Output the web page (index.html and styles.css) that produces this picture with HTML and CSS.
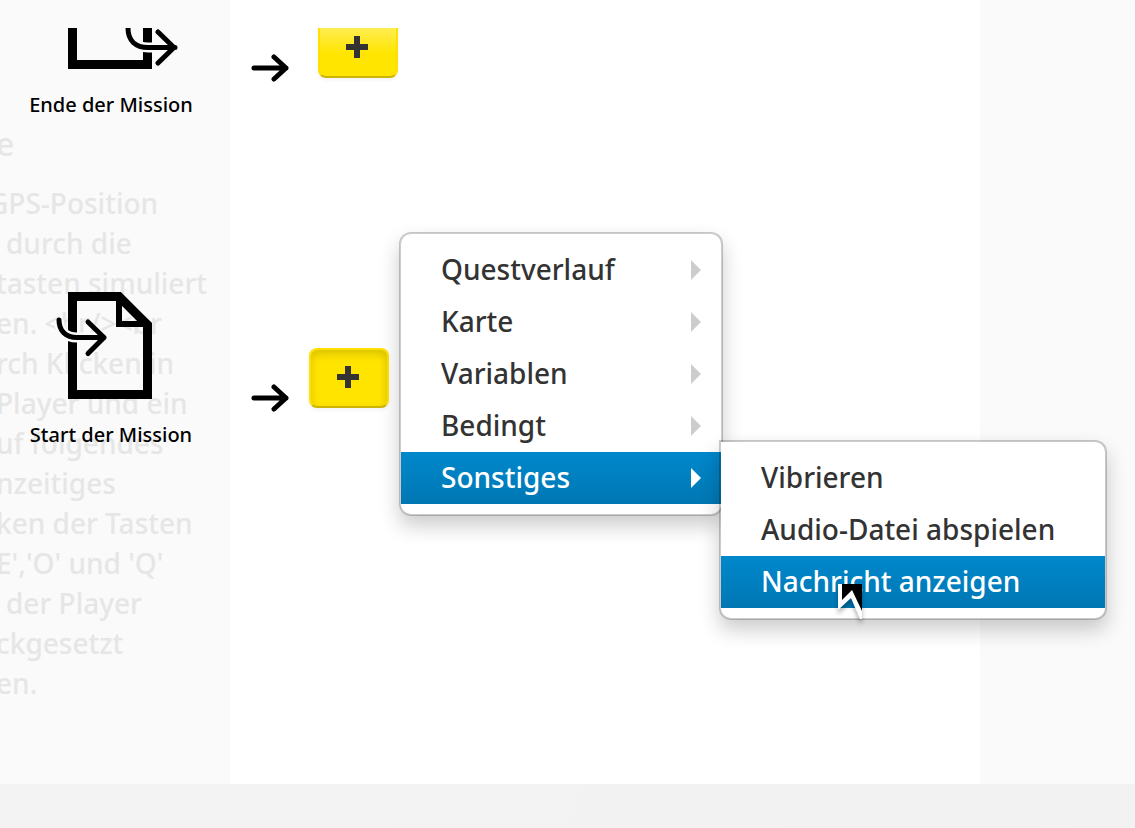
FILE: index.html
```html
<!DOCTYPE html>
<html lang="de">
<head>
<meta charset="utf-8">
<title>Mission</title>
<link rel="stylesheet" href="styles.css">
</head>
<body>
<main class="editor">
  <aside class="help">
    <h2 class="help-title">e</h2>
    <p class="help-text">
      <span class="line line-cut">GPS-Position</span>
      <span class="line line-in">durch die</span>
      <span class="line">tasten simuliert</span>
      <span class="line">en. &lt;br/&gt;&lt;br</span>
      <span class="line">rch Klicken in</span>
      <span class="line">Player und ein</span>
      <span class="line">uf folgendes</span>
      <span class="line">nzeitiges</span>
      <span class="line">ken der Tasten</span>
      <span class="line">E','O' und 'Q'</span>
      <span class="line line-in">der Player</span>
      <span class="line">ckgesetzt</span>
      <span class="line">en.</span>
    </p>
  </aside>
  <div class="canvas"></div>
  <div class="side"></div>

  <div class="rules">
    <section class="rule">
      <div class="trigger">
        <svg class="trigger-icon" width="124" height="107" viewBox="0 0 124 107">
          <path fill="none" stroke="#000" stroke-width="9" d="M17.500 4.500H64L92.500 33.500V102.500H17.500Z"/>
          <path fill="none" stroke="#fafafa" stroke-width="10" d="M73 66C73 79 81 85.500 93 85.500H112"/>
          <path fill="none" stroke="#000" stroke-width="5" stroke-linecap="round" stroke-linejoin="round" d="M73 66C73 79 81 85.500 93 85.500H120M103 70L119 85.500L103 101"/>
        </svg>
        <span class="trigger-label">Ende der Mission</span>
      </div>
      <svg class="arrow" width="40" height="30" viewBox="0 0 40 30"><path d="M4 15H36M24 4L36 15L24 26"/></svg>
      <div class="action action-wide">
        <button class="add" type="button" aria-label="Aktion hinzufügen">
          <svg width="22" height="22" viewBox="0 0 22 22"><path d="M8 0H14V8H22V14H14V22H8V14H0V8H8Z"/></svg>
        </button>
      </div>
    </section>

    <section class="rule">
      <div class="trigger">
        <svg class="trigger-icon" width="124" height="107" viewBox="0 0 124 107">
          <path fill="none" stroke="#000" stroke-width="9" d="M17.500 4.500H64L92.500 33V102.500H17.500Z"/>
          <path fill="#000" fill-rule="evenodd" d="M61 2H66L97 31V35H61ZM67 13V29H83Z"/>
          <path fill="none" stroke="#fafafa" stroke-width="10" d="M4 28C4 39 11 45.500 22 45.500H41"/>
          <path fill="none" stroke="#000" stroke-width="5" stroke-linecap="round" stroke-linejoin="round" d="M4 28C4 39 11 45.500 22 45.500H49M33 30L49 45.500L33 61.500"/>
        </svg>
        <span class="trigger-label">Start der Mission</span>
      </div>
      <svg class="arrow" width="40" height="30" viewBox="0 0 40 30"><path d="M4 15H36M24 4L36 15L24 26"/></svg>
      <div class="action">
        <button class="add add-open" type="button" aria-label="Aktion hinzufügen" aria-expanded="true">
          <svg width="22" height="22" viewBox="0 0 22 22"><path d="M8 0H14V8H22V14H14V22H8V14H0V8H8Z"/></svg>
        </button>
        <ul class="menu">
          <li><button class="item item-parent" type="button">Questverlauf</button></li>
          <li><button class="item item-parent" type="button">Karte</button></li>
          <li><button class="item item-parent" type="button">Variablen</button></li>
          <li><button class="item item-parent" type="button">Bedingt</button></li>
          <li class="has-sub">
            <button class="item item-parent item-active" type="button">Sonstiges</button>
            <ul class="menu submenu">
              <li><button class="item" type="button">Vibrieren</button></li>
              <li><button class="item" type="button">Audio-Datei abspielen</button></li>
              <li class="has-sub">
                <button class="item item-active" type="button">Nachricht anzeigen</button>
                <svg class="cursor" width="28" height="46" viewBox="0 0 28 46">
                  <path fill="#000" d="M4 0H24V31L14 10L4 20Z"/>
                  <path fill="#fff" d="M0 0H4V16L14 6L24 27V35H22L13 14L0 26Z"/>
                </svg>
              </li>
            </ul>
          </li>
        </ul>
      </div>
    </section>
  </div>
</main>
<footer class="footer"></footer>
</body>
</html>
```
FILE: styles.css
```css
* { box-sizing: border-box; }

body {
  margin: 0;
  min-height: 100vh;
  display: flex;
  flex-direction: column;
  overflow-x: hidden;
  font-family: "Noto Sans", "Open Sans", sans-serif;
  color: #333;
  background: #fff;
}

.editor {
  position: relative;
  display: grid;
  grid-template-columns: 230px 1fr 155px;
}

.help {
  padding: 124px 0 80px;
  overflow: hidden;
  color: #e6e6e6;
  background: #fafafa;
}

.help-title {
  margin: 0 0 19px -4px;
  font-size: 32px;
  line-height: 40px;
  font-weight: 500;
}

.help-text {
  margin: 0;
  padding-bottom: 1px;
  font-size: 28px;
  line-height: 40px;
  font-weight: 500;
}

.line {
  display: block;
  margin-left: -4px;
  white-space: nowrap;
}

.line-cut { margin-left: -12px; }
.line-in { margin-left: 6px; }

.canvas { background: #fff; }
.side { background: #fafafa; }

.rules {
  position: absolute;
  inset: 28px 0 0;
  overflow: hidden;
}

.rule {
  display: flex;
  align-items: flex-start;
  height: 330px;
}

.rule:first-child { margin-top: -66px; }

.trigger {
  width: 230px;
  padding-right: 8px;
  display: flex;
  flex-direction: column;
  align-items: center;
  gap: 22px;
}

.trigger-icon { margin-left: 12px; }

.trigger-label {
  font-size: 20px;
  line-height: 28px;
  font-weight: 500;
  color: #000;
}

.arrow {
  margin: 91px 0 0 20px;
  fill: none;
  stroke: #000;
  stroke-width: 5;
  stroke-linecap: round;
  stroke-linejoin: round;
}

.action {
  position: relative;
  margin: 56px 0 0 19px;
}

.action-wide { margin-left: 28px; }

.add {
  display: flex;
  align-items: flex-start;
  justify-content: center;
  width: 80px;
  height: 60px;
  padding: 16px 0 0;
  border: 2px solid #ffe000;
  border-bottom-color: #ccb400;
  border-radius: 8px;
  background: linear-gradient(#fff06a, #ffe500 60%);
  box-shadow: 0 2px 4px rgba(0, 0, 0, 0.05);
}

.add svg {
  fill: #333;
  margin-right: 2px;
}

.add-open {
  background: #ffe400;
  box-shadow: inset 0 4px 8px rgba(0, 0, 0, 0.15), 0 2px 4px rgba(0, 0, 0, 0.05);
}

.menu {
  position: absolute;
  left: 90px;
  top: -116px;
  z-index: 2;
  width: 324px;
  margin: 0;
  padding: 10px 0;
  list-style: none;
  border: 2px solid rgba(0, 0, 0, 0.2);
  border-radius: 12px;
  background: #fff;
  background-clip: padding-box;
  box-shadow: 0 10px 20px rgba(0, 0, 0, 0.2);
}

.submenu {
  left: calc(100% - 2px);
  top: -12px;
  width: 388px;
  border-radius: 0 12px 12px 12px;
}

.has-sub { position: relative; }

.item {
  position: relative;
  display: block;
  width: 100%;
  padding: 5px 20px 7px 40px;
  border: 0;
  background: none;
  font: 500 28px/40px "Noto Sans", "Open Sans", sans-serif;
  color: #333;
  text-align: left;
  white-space: nowrap;
}

.item-parent::after {
  content: "";
  position: absolute;
  right: 20px;
  top: 16px;
  border: 10px solid transparent;
  border-right-width: 0;
  border-left-color: #ccc;
}

.item-active {
  color: #fff;
  background: linear-gradient(#08c, #0077b3);
}

.item-active::after { border-left-color: #fff; }

.cursor {
  position: absolute;
  left: 117px;
  top: 28px;
  filter: drop-shadow(0 4px 2px rgba(0, 0, 0, 0.3));
}

.footer {
  flex: 1;
  min-height: 44px;
  background: linear-gradient(110deg, #f3f3f3, #f2f2f2);
}
```
